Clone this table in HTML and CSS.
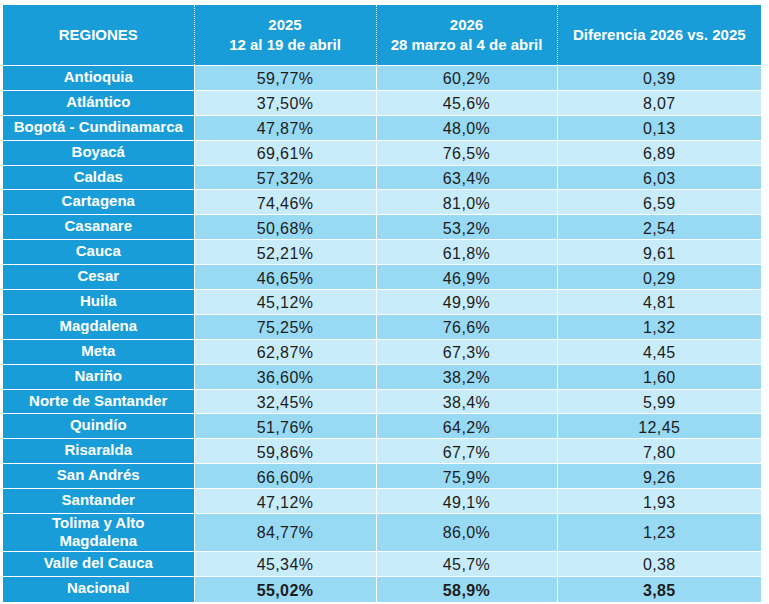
FILE: index.html
```html
<!DOCTYPE html>
<html lang="es">
<head>
<meta charset="utf-8">
<title>Regiones</title>
<link rel="stylesheet" href="styles.css">
</head>
<body>
<table class="tbl">
  <colgroup>
    <col class="c1"><col class="c2"><col class="c3"><col class="c4">
  </colgroup>
  <thead>
    <tr>
      <th>REGIONES</th>
      <th>2025<br>12 al 19 de abril</th>
      <th>2026<br>28 marzo al 4 de abril</th>
      <th>Diferencia 2026 vs. 2025</th>
    </tr>
  </thead>
  <tbody>
    <tr><th>Antioquia</th><td>59,77%</td><td>60,2%</td><td>0,39</td></tr>
    <tr><th>Atlántico</th><td>37,50%</td><td>45,6%</td><td>8,07</td></tr>
    <tr><th>Bogotá - Cundinamarca</th><td>47,87%</td><td>48,0%</td><td>0,13</td></tr>
    <tr><th>Boyacá</th><td>69,61%</td><td>76,5%</td><td>6,89</td></tr>
    <tr><th>Caldas</th><td>57,32%</td><td>63,4%</td><td>6,03</td></tr>
    <tr><th>Cartagena</th><td>74,46%</td><td>81,0%</td><td>6,59</td></tr>
    <tr><th>Casanare</th><td>50,68%</td><td>53,2%</td><td>2,54</td></tr>
    <tr><th>Cauca</th><td>52,21%</td><td>61,8%</td><td>9,61</td></tr>
    <tr><th>Cesar</th><td>46,65%</td><td>46,9%</td><td>0,29</td></tr>
    <tr><th>Huila</th><td>45,12%</td><td>49,9%</td><td>4,81</td></tr>
    <tr><th>Magdalena</th><td>75,25%</td><td>76,6%</td><td>1,32</td></tr>
    <tr><th>Meta</th><td>62,87%</td><td>67,3%</td><td>4,45</td></tr>
    <tr><th>Nariño</th><td>36,60%</td><td>38,2%</td><td>1,60</td></tr>
    <tr><th>Norte de Santander</th><td>32,45%</td><td>38,4%</td><td>5,99</td></tr>
    <tr><th>Quindío</th><td>51,76%</td><td>64,2%</td><td>12,45</td></tr>
    <tr><th>Risaralda</th><td>59,86%</td><td>67,7%</td><td>7,80</td></tr>
    <tr><th>San Andrés</th><td>66,60%</td><td>75,9%</td><td>9,26</td></tr>
    <tr><th>Santander</th><td>47,12%</td><td>49,1%</td><td>1,93</td></tr>
    <tr class="tall"><th>Tolima y Alto<br>Magdalena</th><td>84,77%</td><td>86,0%</td><td>1,23</td></tr>
    <tr><th>Valle del Cauca</th><td>45,34%</td><td>45,7%</td><td>0,38</td></tr>
    <tr class="total"><th>Nacional</th><td>55,02%</td><td>58,9%</td><td>3,85</td></tr>
  </tbody>
</table>
</body>
</html>
```
FILE: styles.css
```css
html, body {
  margin: 0;
  padding: 0;
  background: #ffffff;
}
body {
  padding: 5px 0 0 3px;
}
.tbl {
  border-collapse: collapse;
  table-layout: fixed;
  width: 758px;
  font-family: "Liberation Sans", Arial, sans-serif;
}
.c1 { width: 191px; }
.c2 { width: 182px; }
.c3 { width: 181px; }
.c4 { width: 204px; }

.tbl thead th {
  background: #189dd8;
  color: #ffffff;
  font-weight: 700;
  font-size: 15px;
  line-height: 20px;
  height: 60px;
  padding: 0 4px;
  text-align: center;
  vertical-align: middle;
  border-left: 1px dotted #e6f5fc;
  border-bottom: 1px solid #ffffff;
}
.tbl thead th:first-child {
  border-left: none;
}
.tbl tbody th {
  background: #189dd8;
  color: #ffffff;
  font-weight: 700;
  font-size: 15px;
  line-height: 17px;
  padding: 0 4px 3px;
  height: 20px;
  text-align: center;
  vertical-align: middle;
  border: 1px solid #ffffff;
  border-left: none;
}
.tbl tbody td {
  color: #1c1c1c;
  font-size: 16px;
  letter-spacing: 0.4px;
  line-height: 18px;
  padding: 3px 4px 0;
  height: 20.9px;
  text-align: center;
  vertical-align: middle;
  border: 1px solid #ffffff;
}
.tbl tbody td:last-child {
  border-right: none;
}
.tbl tbody tr:nth-child(odd) td {
  background: #98daf4;
}
.tbl tbody tr:nth-child(even) td {
  background: #c8ecfa;
}
.tbl tbody tr.tall th {
  line-height: 18px;
  padding: 0 4px 1px;
}
.tbl tbody tr.tall td {
  height: 33.5px;
  padding-top: 0;
}
.tbl tbody tr.total td {
  height: 22px;
}
.tbl tbody tr:last-child th,
.tbl tbody tr:last-child td {
  border-bottom: none;
}
.tbl tbody tr.total td {
  font-weight: 700;
}
```
